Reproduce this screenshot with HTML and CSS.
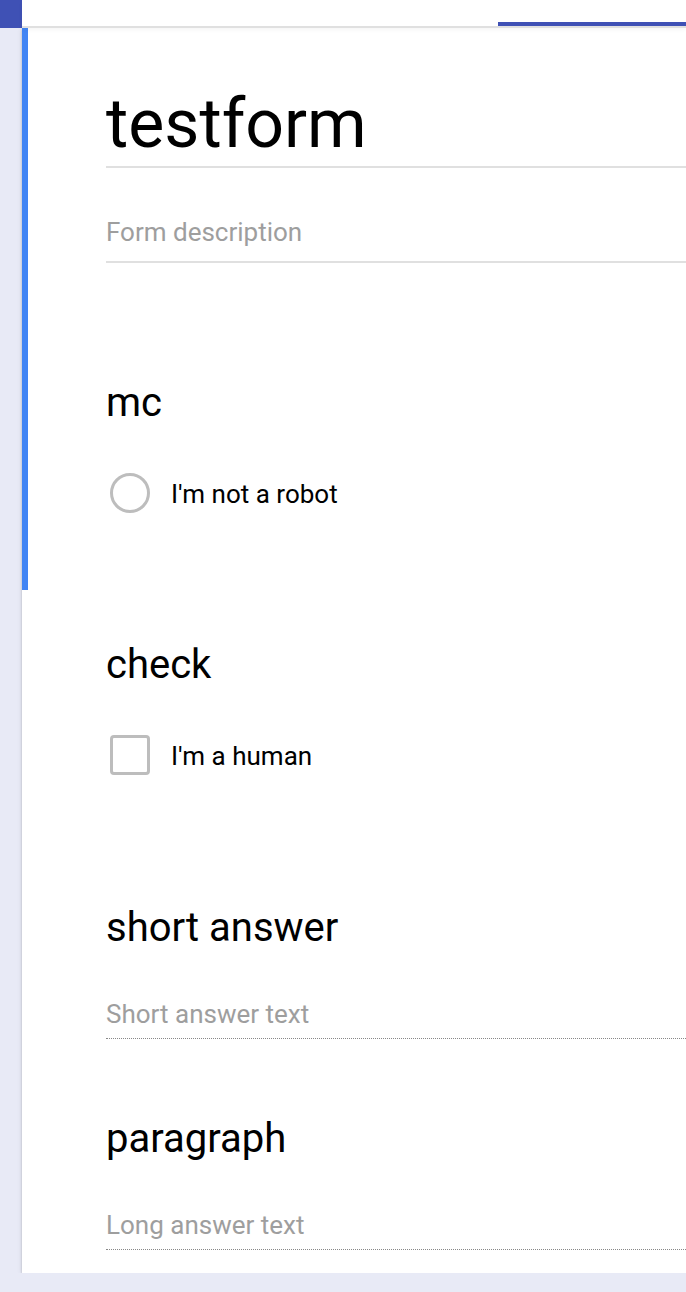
FILE: index.html
```html
<!DOCTYPE html>
<html>
<head>
<meta charset="utf-8">
<link rel="stylesheet" href="styles.css">
</head>
<body>
<div class="topbar">
  <div class="corner"></div>
  <div class="band">
    <div class="tabline"></div>
  </div>
</div>
<div class="card">
  <div class="group selected">
    <div class="header">
      <div class="title">testform</div>
      <div class="desc">Form description</div>
    </div>
    <div class="item">
      <div class="qtitle">mc</div>
      <div class="option">
        <span class="radio"></span>
        <span class="otext">I'm not a robot</span>
      </div>
    </div>
  </div>
  <div class="item plain choice">
    <div class="qtitle">check</div>
    <div class="option">
      <span class="checkbox"></span>
      <span class="otext">I'm a human</span>
    </div>
  </div>
  <div class="item plain text">
    <div class="qtitle">short answer</div>
    <div class="answer">Short answer text</div>
  </div>
  <div class="item plain text last">
    <div class="qtitle">paragraph</div>
    <div class="answer">Long answer text</div>
  </div>
</div>
</body>
</html>
```
FILE: styles.css
```css
html, body {
  margin: 0;
  padding: 0;
}
body {
  background: #e8eaf6;
  font-family: Roboto, "Noto Sans", Arial, sans-serif;
  color: #000;
  overflow: hidden;
}
.topbar {
  display: flex;
  height: 28px;
  position: relative;
  z-index: 2;
}
.corner {
  width: 22px;
  height: 28px;
  background: #3f51b5;
  flex: none;
}
.band {
  flex: 1;
  height: 26px;
  background: #fff;
  border-bottom: 2px solid #e0e0e0;
  display: flex;
  justify-content: flex-end;
  align-items: flex-end;
  box-shadow: 0 2px 4px rgba(0,0,0,0.04);
}
.tabline {
  width: 188px;
  height: 4px;
  background: #3f51b5;
}
.card {
  margin-left: 22px;
  background: #fff;
  box-shadow: 0 2px 2px rgba(0,0,0,0.16), 0 1px 5px rgba(0,0,0,0.12), 0 3px 1px -2px rgba(0,0,0,0.2);
}
.group.selected {
  border-left: 6px solid #4285f4;
  padding-left: 78px;
}
.item.plain {
  padding-left: 84px;
}
.header {
  padding-top: 55px;
  padding-bottom: 66px;
}
.title {
  font-size: 68px;
  line-height: 83px;
  border-bottom: 2px solid #e0e0e0;
}
.desc {
  margin-top: 46px;
  font-size: 26px;
  line-height: 36px;
  color: #9e9e9e;
  padding-bottom: 11px;
  border-bottom: 2px solid #e0e0e0;
}
.item {
  padding-top: 50px;
  padding-bottom: 76px;
}
.item.choice {
  padding-top: 51px;
  padding-bottom: 78px;
}
.item.text {
  padding-bottom: 26px;
}
.item.text.last {
  padding-bottom: 23px;
}
.qtitle {
  font-size: 40px;
  line-height: 48px;
}
.option {
  margin-top: 46px;
  display: flex;
  align-items: flex-start;
  gap: 21px;
  margin-left: 4px;
}
.radio {
  width: 34px;
  height: 34px;
  border: 3px solid #bdbdbd;
  border-radius: 50%;
  flex: none;
}
.checkbox {
  width: 34px;
  height: 34px;
  border: 3px solid #bdbdbd;
  border-radius: 4px;
  flex: none;
}
.otext {
  font-size: 26px;
  line-height: 40px;
  margin-top: 1px;
}
.answer {
  margin-top: 44px;
  font-size: 26px;
  line-height: 36px;
  color: #9e9e9e;
  padding-bottom: 6px;
  border-bottom: 1px dotted #888;
}
```
